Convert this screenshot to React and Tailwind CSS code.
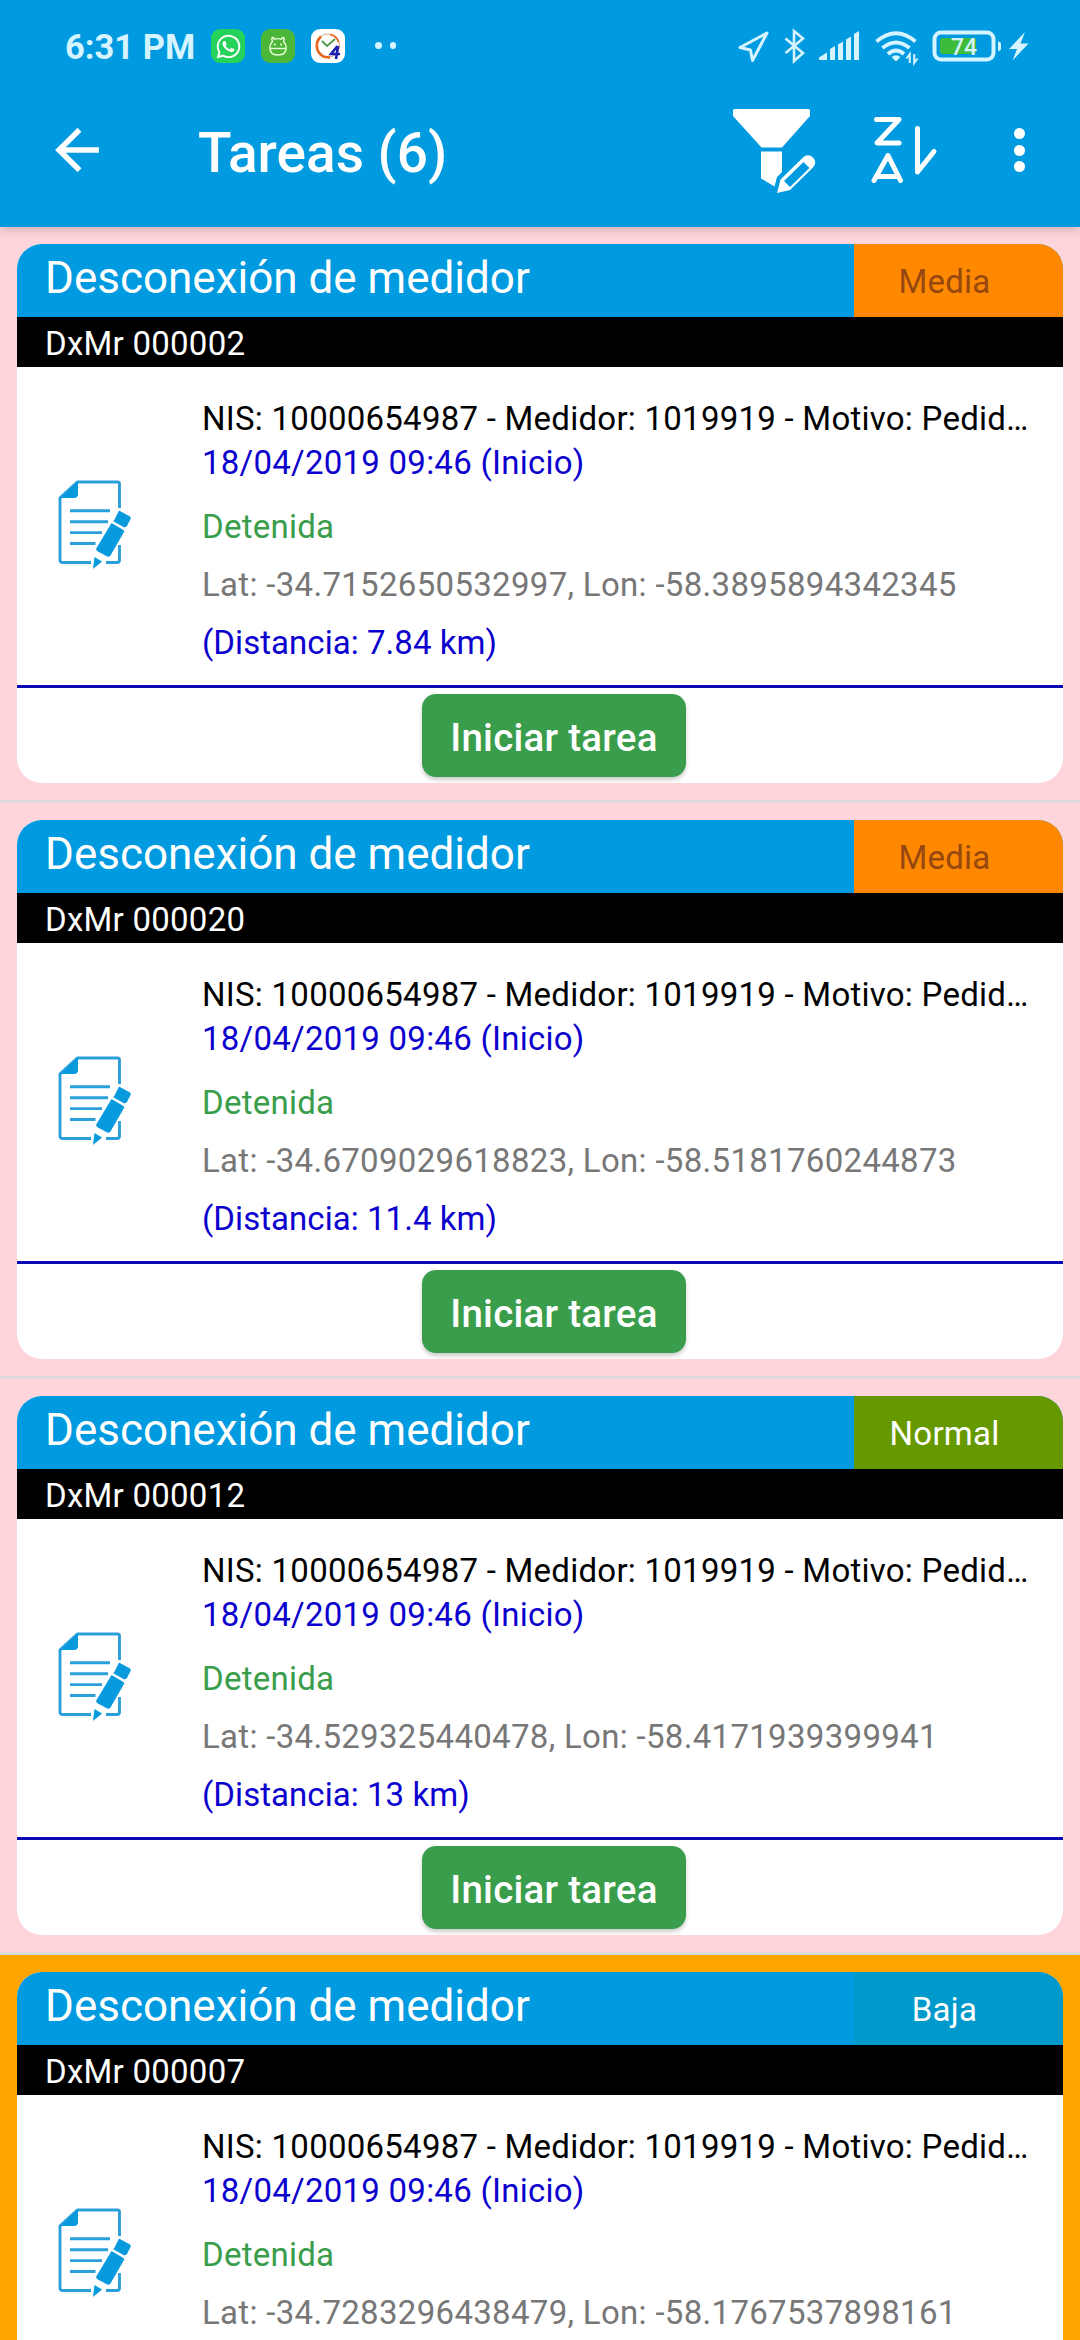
import { FaWhatsapp } from "react-icons/fa";

const tasks = [
  {
    id: "DxMr 000002",
    priority: "Media",
    coords: "Lat: -34.7152650532997, Lon: -58.3895894342345",
    distance: "(Distancia: 7.84 km)",
    late: true,
  },
  {
    id: "DxMr 000020",
    priority: "Media",
    coords: "Lat: -34.6709029618823, Lon: -58.5181760244873",
    distance: "(Distancia: 11.4 km)",
    late: true,
  },
  {
    id: "DxMr 000012",
    priority: "Normal",
    coords: "Lat: -34.529325440478, Lon: -58.4171939399941",
    distance: "(Distancia: 13 km)",
    late: true,
  },
  {
    id: "DxMr 000007",
    priority: "Baja",
    coords: "Lat: -34.7283296438479, Lon: -58.1767537898161",
    late: false,
  },
];

const priorityStyles = {
  Media: "bg-[#ff8800] text-[#964810]",
  Normal: "bg-[#669900] text-white",
  Baja: "bg-[#0099cc] text-white",
};

function StatusBar() {
  return (
    <div className="flex h-[92px] items-center pl-[65px] pr-[51px] text-[#d6f4ff]">
      <span className="w-[146px] whitespace-nowrap pt-[2px] text-[34.500px] font-bold leading-none">
        6:31 PM
      </span>

      {/* Notifications */}
      <div className="flex items-center gap-[16px]">
        <div className="flex size-[34px] items-center justify-center rounded-[9px] bg-[#25d35b] text-white">
          <FaWhatsapp size={27} />
        </div>
        <div className="size-[34px] rounded-[9px] bg-[#4cb638]">
          <svg viewBox="0 0 34 34" fill="none" stroke="#eaffd8" strokeWidth="1.4">
            <path d="M11.500 12.500Q10 9.500 11.500 8.500Q13 8.300 13.500 10.200Q17 9 20.500 10.200Q21 8.300 22.500 8.500Q24 9.500 22.500 12.500Q25.200 15.500 25.200 18.500Q25.200 26 17 26Q8.800 26 8.800 18.500Q8.800 15.500 11.500 12.500Z" />
            <path d="M9 19.500H25" />
            <circle cx="13.800" cy="15.500" r="1.100" fill="#eaffd8" stroke="none" />
            <circle cx="20.200" cy="15.500" r="1.100" fill="#eaffd8" stroke="none" />
          </svg>
        </div>
        <div className="size-[34px] rounded-[9px] bg-white">
          <svg viewBox="0 0 34 34" fill="none">
            <circle cx="17" cy="16.500" r="11.500" stroke="#d9a58c" strokeWidth="1.200" />
            <path d="M10 7.500Q4 13 6.500 21Q10 29 19 28.500" stroke="#e8641b" strokeWidth="2.600" />
            <path d="M19 5.500Q26 7 27.500 13" stroke="#e8641b" strokeWidth="1.600" />
            <path d="M11 12L16 17L24 10" stroke="#4c9a48" strokeWidth="1.800" />
            <path d="M26.500 17L20 25H29M27 17L25 30" stroke="#1c1fae" strokeWidth="2.600" />
          </svg>
        </div>
        <div className="ml-[14px] flex gap-[8px] pb-[1px]">
          <span className="size-[6.500px] rounded-full bg-[#d6f4ff]" />
          <span className="size-[6.500px] rounded-full bg-[#d6f4ff]" />
        </div>
      </div>

      {/* System icons */}
      <svg className="ml-auto h-[40px] w-[292px]" viewBox="737 26 292 40" fill="none">
        <path
          d="M767 33L740 47.500L750.500 50L752.500 60.500Z"
          stroke="currentColor"
          strokeWidth="3"
          strokeLinejoin="round"
        />
        <path
          d="M785.500 38.500L803 53L794 61V31L803 38.500L785.500 53"
          stroke="currentColor"
          strokeWidth="2.600"
        />
        <g fill="currentColor">
          <path d="M819 60V57.500L827 52.500V60Z" />
          <path d="M830 60V49L835 46V60Z" />
          <path d="M838 60V44.500L843 41.500V60Z" />
          <path d="M846 60V39.500L851 36.500V60Z" />
          <path d="M854 60V34L859 31V60Z" />
        </g>
        <g stroke="currentColor" strokeWidth="4">
          <path d="M876.500 41.500Q896 25 915.500 41.500" />
          <path d="M882.500 48Q896 37 909.500 48" />
          <path d="M888 54Q896 47 904 54" />
        </g>
        <path d="M891.500 57Q896 53.500 900.500 57L896 61.500Z" fill="currentColor" />
        <path
          d="M909.800 63V54L906.500 58.500M914.200 54V63L917.500 58.500"
          stroke="currentColor"
          strokeWidth="2"
        />
        <rect x="934.500" y="32.500" width="59" height="27" rx="6.500" stroke="currentColor" strokeWidth="4" />
        <rect x="940" y="38" width="36" height="16" rx="3" fill="#3dbb3a" />
        <path d="M998 41.500Q1001 41.500 1001 44V48.500Q1001 51 998 51Z" fill="currentColor" />
        <text
          x="964"
          y="55"
          textAnchor="middle"
          fill="currentColor"
          fontSize="23"
          fontWeight="500"
        >
          74
        </text>
        <path d="M1025 32L1009 49H1017L1012.500 60.500L1028.500 43.500H1020.500Z" fill="currentColor" />
      </svg>
    </div>
  );
}

function FilterEditIcon() {
  return (
    <svg className="h-[86px] w-[84px]" viewBox="731 108 84 86" fill="#fff">
      <path d="M733.500 109H807.500Q809 109 809 110.500V116L781 147.500H760.500L732 116V110.500Q732 109 733.500 109Z" />
      <path d="M760 151.500H781V172L776 177L773.500 186.500L760 178.500Z" />
      <path
        fillRule="evenodd"
        d="M776 193L779.500 179.500L802 157.500Q807 153 812 157.500Q816.500 162.500 812 167.500L789 190ZM783 181L789 187L808.500 168L802.500 162Z"
      />
    </svg>
  );
}

function SortIcon() {
  return (
    <svg
      className="h-[68px] w-[68px]"
      viewBox="869 115 68 68"
      fill="none"
      stroke="#fff"
      strokeWidth="5"
      strokeLinecap="round"
      strokeLinejoin="round"
    >
      <path d="M875.500 119.500H898L876 143H898" />
      <path d="M873 180.500L887 155.500L899.500 180.500M876.500 176.500H896.500" />
      <path d="M916.500 128.500V172L933 151.500" />
    </svg>
  );
}

function AppBar() {
  return (
    <div className="flex h-[135px] items-start pl-[55px] pr-[55px] text-white">
      <svg className="mt-[36px] size-[44px]" viewBox="0 0 44 44" fill="none" stroke="#fff" strokeWidth="5.500">
        <path d="M44 22H4M24.500 1.800L4 22L24.500 42.200" />
      </svg>
      <h1 className="ml-[99px] mt-[29px] text-[55px] font-medium leading-[64px]">
        Tareas (6)
      </h1>
      <div className="ml-auto flex">
        <div className="mt-[16px]">
          <FilterEditIcon />
        </div>
        <div className="ml-[54px] mt-[23px]">
          <SortIcon />
        </div>
        <div className="ml-[76px] mt-[36px] flex flex-col gap-[5.500px]">
          <span className="size-[11px] rounded-full bg-white" />
          <span className="size-[11px] rounded-full bg-white" />
          <span className="size-[11px] rounded-full bg-white" />
        </div>
      </div>
    </div>
  );
}

function DocumentIcon() {
  return (
    <svg className="h-[89px] w-[75px] shrink-0" viewBox="57 480 75 89">
      <g fill="none" stroke="#2a9fda" strokeWidth="2.900">
        <path d="M119.500 508V484Q119.500 482 117.500 482H77.500L60 498V560Q60 562.500 62.500 562.500H91M106 562.500H117Q119.500 562.500 119.500 560V545" />
        <path d="M70 510.800H110M70 521.700H108M70 532.600H102M70 543.500H95.500" />
      </g>
      <path d="M60 498L78 481.500V494Q78 498 74 498Z" fill="#0999dd" />
      <g fill="#0999dd">
        <path d="M119 510.500L130 516.500Q131.500 517.500 130.500 519L127 526Q125.500 528 123.500 527L113.500 521.500Z" />
        <path d="M111.500 523L123.500 530Q124.500 531 124 532L110.500 555.500Q109 557.500 107 556.500L97 551Q95.500 549.500 96.500 548Z" />
        <path d="M94.500 557L102 561.500L93 569Z" />
      </g>
    </svg>
  );
}

function TaskCard({ task }) {
  return (
    <li
      className={`h-[576px] shrink-0 border-b-[3px] border-[#dedada] px-[17px] pt-[17px] ${
        task.late ? "bg-[#fdd5da]" : "bg-[#ffa500]"
      }`}
    >
      <article className="h-[539px] overflow-hidden rounded-[25px] bg-white">
        <header className="flex h-[73px] bg-[#009ae0]">
          <h2 className="flex-1 whitespace-nowrap pl-[28px] pt-[8px] text-[44px] leading-[52px] text-white">
            Desconexión de medidor
          </h2>
          <span
            className={`w-[209px] pr-[28px] pt-[16px] text-center text-[33px] leading-[44px] tracking-[0.25px] ${
              priorityStyles[task.priority]
            }`}
          >
            {task.priority}
          </span>
        </header>
        <div className="h-[50px] bg-black pl-[28px] pt-[5px] text-[33px] leading-[44px] tracking-[0.25px] text-white">
          {task.id}
        </div>

        {/* Details */}
        <div className="flex h-[318px] items-start pl-[40px] text-[33px] leading-[44px] tracking-[0.25px]">
          <div className="mt-[113px]">
            <DocumentIcon />
          </div>
          <div className="ml-[70px] whitespace-nowrap pt-[30px]">
            <p className="text-black">
              NIS: 10000654987 - Medidor: 1019919 - Motivo: Pedid…
            </p>
            <p className="text-[#0b00cd]">18/04/2019 09:46 (Inicio)</p>
            <p className="mt-[20px] text-[#3a9d4b]">Detenida</p>
            <p className="mt-[14px] tracking-[0.310px] text-[#777]">{task.coords}</p>
            {task.distance && (
              <p className="mt-[14px] tracking-[0.050px] text-[#0b00cd]">
                {task.distance}
              </p>
            )}
          </div>
        </div>

        <footer className="flex h-[98px] justify-center border-t-[3px] border-[#0808b4] pl-[28px] pt-[6px]">
          <button className="h-[83px] w-[264px] rounded-[14px] bg-[#3a9d4b] pt-[5px] text-[38.500px] font-medium tracking-[0.250px] text-white shadow-[0_3px_4px_rgba(0,0,0,0.2)]">
            Iniciar tarea
          </button>
        </footer>
      </article>
    </li>
  );
}

export default function App() {
  return (
    <main className="flex h-[2340px] w-[1080px] flex-col overflow-hidden bg-white font-['Roboto',sans-serif]">
      <div className="z-10 shrink-0 bg-[#009ae0] shadow-[0_2px_10px_rgba(0,0,0,0.2)]">
        <StatusBar />
        <AppBar />
      </div>
      <ul className="min-h-0 flex-1 overflow-hidden">
        {tasks.map((task) => (
          <TaskCard key={task.id} task={task} />
        ))}
      </ul>
    </main>
  );
}
